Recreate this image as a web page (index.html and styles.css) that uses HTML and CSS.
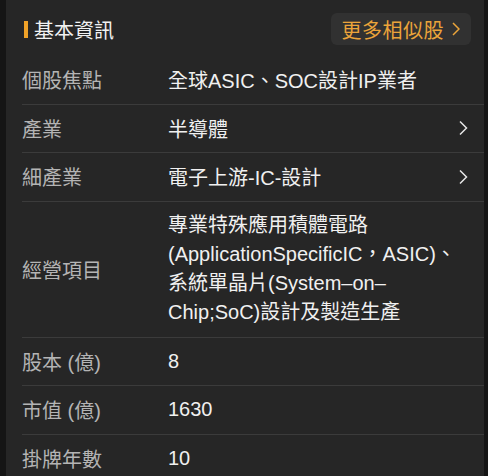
FILE: index.html
```html
<!DOCTYPE html>
<html lang="zh-Hant">
<head>
<meta charset="utf-8">
<title>基本資訊</title>
<link rel="stylesheet" href="styles.css">
</head>
<body>
<div class="panel">
  <div class="header">
    <h2 class="title"><span class="mark"></span>基本資訊</h2>
    <a class="more" href="#">更多相似股<svg class="more-chev" width="8" height="14" viewBox="0 0 8 14"><polyline points="1,1 7,7 1,13" fill="none" stroke="#eba43a" stroke-width="1.5"/></svg></a>
  </div>
  <div class="row"><div class="label">個股焦點</div><div class="value">全球ASIC、SOC設計IP業者</div><div></div></div>
  <div class="row"><div class="label">產業</div><div class="value">半導體</div><svg class="chev" width="10" height="16" viewBox="0 0 10 16"><polyline points="2,1.5 8.5,8 2,14.5" fill="none" stroke="#e6e6e6" stroke-width="1.5"/></svg></div>
  <div class="row"><div class="label">細產業</div><div class="value">電子上游-IC-設計</div><svg class="chev" width="10" height="16" viewBox="0 0 10 16"><polyline points="2,1.5 8.5,8 2,14.5" fill="none" stroke="#e6e6e6" stroke-width="1.5"/></svg></div>
  <div class="row tall"><div class="label">經營項目</div><div class="value multi">專業特殊應用積體電路<br>(ApplicationSpecificIC，ASIC)、<br>系統單晶片(System–on–<br>Chip;SoC)設計及製造生產</div><div></div></div>
  <div class="row"><div class="label">股本 (億)</div><div class="value">8</div><div></div></div>
  <div class="row"><div class="label">市值 (億)</div><div class="value">1630</div><div></div></div>
  <div class="row last"><div class="label">掛牌年數</div><div class="value">10</div><div></div></div>
</div>
</body>
</html>
```

FILE: styles.css
```css
html, body {
  margin: 0;
  padding: 0;
  background: #151515;
  height: 100%;
  overflow: hidden;
}
body {
  font-family: "Liberation Sans", "Noto Sans CJK TC", sans-serif;
}
.panel {
  margin: 0 4px 0 6px;
  background: #262626;
  min-height: 100%;
}
.header {
  height: 56px;
  box-sizing: border-box;
  display: flex;
  align-items: center;
  justify-content: space-between;
  padding: 2px 13px 0 18px;
}
.title {
  margin: 0;
  display: flex;
  align-items: center;
  font-size: 20px;
  font-weight: normal;
  color: #f2f2f2;
}
.mark {
  width: 4px;
  height: 17px;
  background: #f0a228;
  margin-right: 6px;
}
.more {
  display: flex;
  align-items: center;
  gap: 8px;
  height: 32px;
  box-sizing: border-box;
  padding: 0 11px 0 11px;
  background: #313131;
  border-radius: 6px;
  color: #eba43a;
  font-size: 20px;
  text-decoration: none;
  letter-spacing: 0.5px;
}
.row {
  display: grid;
  grid-template-columns: 146px 1fr auto;
  align-items: center;
  margin-left: 16px;
  padding-right: 16px;
  height: 48.5px;
  box-sizing: border-box;
  border-bottom: 1px solid #3b3b3b;
}
.row.tall {
  height: 136px;
}
.row.last {
  border-bottom: none;
}
.label {
  font-size: 20px;
  color: #b4b4b4;
}
.value {
  font-size: 20px;
  color: #f0f0f0;
}
.value.multi {
  line-height: 29px;
  white-space: nowrap;
}
.chev {
  display: block;
}
```
